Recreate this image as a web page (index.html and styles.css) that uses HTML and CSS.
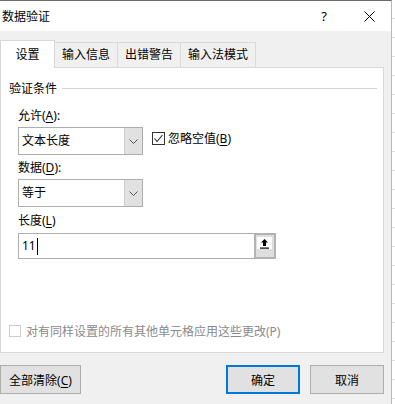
FILE: index.html
```html
<!DOCTYPE html>
<html lang="zh-CN">
<head>
    <meta charset="UTF-8">
    <title>数据验证</title>
    <link rel="stylesheet" href="styles.css">
</head>
<body>
    <div class="window">
        <div class="titlebar">
            <span class="title">数据验证</span>
            <span class="help">?</span>
            <span class="close">
                <svg width="11" height="11" viewBox="0 0 11 11"><path d="M0.5 0.5L10.5 10.5M10.5 0.5L0.5 10.5" stroke="#000" stroke-width="1" fill="none"/></svg>
            </span>
        </div>

        <div class="body">
            <div class="tabs">
                <div class="tab active">设置</div>
                <div class="tab">输入信息</div>
                <div class="tab">出错警告</div>
                <div class="tab">输入法模式</div>
            </div>

            <div class="panel">
                <div class="group-title">
                    <span>验证条件</span>
                    <span class="rule"></span>
                </div>

                <div class="field-label">允许(<u>A</u>):</div>
                <div class="row">
                    <div class="combo">
                        <span class="combo-text">文本长度</span>
                        <span class="combo-btn">
                            <svg width="9" height="5" viewBox="0 0 9 5"><path d="M0.5 0.5L4.5 4.5L8.5 0.5" stroke="#555" fill="none"/></svg>
                        </span>
                    </div>
                    <label class="check">
                        <span class="box">
                            <svg width="11" height="11" viewBox="0 0 11 11"><path d="M1.5 5.5L4 8.5L9.5 2" stroke="#222" stroke-width="1.1" fill="none"/></svg>
                        </span>
                        忽略空值(<u>B</u>)
                    </label>
                </div>

                <div class="field-label gap">数据(<u>D</u>):</div>
                <div class="combo">
                    <span class="combo-text">等于</span>
                    <span class="combo-btn">
                        <svg width="9" height="5" viewBox="0 0 9 5"><path d="M0.5 0.5L4.5 4.5L8.5 0.5" stroke="#555" fill="none"/></svg>
                    </span>
                </div>

                <div class="field-label gap2">长度(<u>L</u>)</div>
                <div class="input-row">
                    <div class="text-input">11<span class="caret"></span></div>
                    <div class="ref-btn">
                        <span class="ref-icon">
                            <svg width="11" height="11" viewBox="0 0 11 11">
                                <path d="M5.5 1L9 4.5H7V8H4V4.5H2Z" fill="#000"/>
                                <rect x="1" y="9.5" width="9" height="1.2" fill="#000"/>
                            </svg>
                        </span>
                    </div>
                </div>

                <label class="apply-all">
                    <span class="box disabled"></span>
                    对有同样设置的所有其他单元格应用这些更改(P)
                </label>
            </div>

            <div class="buttons">
                <button class="btn">全部清除(<u>C</u>)</button>
                <span class="spacer"></span>
                <button class="btn default">确定</button>
                <button class="btn">取消</button>
            </div>
        </div>
    </div>
</body>
</html>
```

FILE: styles.css
```css
body {
    margin: 0;
    width: 395px;
    height: 404px;
    overflow: hidden;
    font-family: "Noto Sans", "Noto Sans CJK SC", sans-serif;
    font-size: 12px;
    color: #000;
    background-color: #fff;
    background-image: repeating-linear-gradient(to bottom, transparent 0, transparent 18px, #dedede 18px, #dedede 19px);
}
.window {
    width: 392px;
    height: 404px;
    border-top: 1px solid #6b6b6b;
    border-right: 1px solid #b9b9b9;
    box-sizing: border-box;
    background: #f0f0f0;
}
.titlebar {
    height: 30px;
    display: flex;
    align-items: center;
    background: #fff;
}
.title {margin-left: 2px; flex: 1;}
.help {
    font-size: 13px;
    margin-right: 37px;
}
.close {
    display: flex;
    margin-right: 16px;
    margin-top: 1px;
}
.body {padding-top: 9px;}
.tabs {
    display: flex;
    align-items: flex-end;
    height: 27px;
}
.tab {
    height: 25px;
    line-height: 23px;
    box-sizing: border-box;
    padding: 0 7px;
    border: 1px solid #d9d9d9;
    border-bottom: none;
    border-left: none;
    background: #f0f0f0;
}
.tab.active {
    height: 28px;
    line-height: 28px;
    width: 55px;
    text-align: center;
    padding: 0;
    margin-bottom: -1px;
    border-left: 1px solid #d9d9d9;
    background: #fff;
    position: relative;
    z-index: 1;
}
.panel {
    width: 384px;
    height: 286px;
    box-sizing: border-box;
    border: 1px solid #d9d9d9;
    background: #fff;
    padding: 12px 6px 0 8px;
}
.group-title {
    display: flex;
    align-items: center;
    height: 16px;
}
.rule {
    flex: 1;
    height: 1px;
    margin-left: 5px;
    background: #d5d5d5;
}
.field-label {
    height: 16px;
    line-height: 16px;
    margin: 12px 0 3px 9px;
}
.field-label.gap {margin-top: 5px;}
.field-label.gap2 {margin-top: 6px; margin-bottom: 4px;}
u {text-decoration-thickness: 1px; text-underline-offset: 2px;}
.row {
    display: flex;
    align-items: flex-start;
}
.combo {
    width: 125px;
    height: 28px;
    box-sizing: border-box;
    margin-left: 9px;
    border: 1px solid #adadad;
    display: flex;
}
.combo-text {
    flex: 1;
    line-height: 26px;
    padding-left: 3px;
}
.combo-btn {
    width: 17px;
    background: #e1e1e1;
    border-left: 1px solid #cfcfcf;
    display: flex;
    align-items: center;
    justify-content: center;
    padding-top: 1px;
}
.check {
    display: flex;
    align-items: center;
    margin: 2px 0 0 9px;
}
.box {
    width: 13px;
    height: 13px;
    box-sizing: border-box;
    border: 1px solid #333;
    display: flex;
    align-items: center;
    justify-content: center;
    margin-right: 3px;
}
.box.disabled {
    width: 12px;
    height: 12px;
    border-color: #cccccc;
    margin-right: 5px;
}
.input-row {
    display: flex;
    margin-left: 9px;
    height: 26px;
}
.text-input {
    width: 236px;
    box-sizing: border-box;
    border: 1px solid #adadad;
    border-right: none;
    line-height: 24px;
    padding-left: 3px;
    display: flex;
    align-items: center;
}
.caret {
    width: 1px;
    height: 17px;
    background: #000;
    margin-left: 1px;
}
.ref-btn {
    width: 22px;
    box-sizing: border-box;
    border: 2px solid #b2b2b2;
    background: #dedede;
}
.ref-icon {
    display: flex;
    justify-content: center;
    align-items: center;
    width: 15px;
    height: 12px;
    margin: 2px 0 0 1px;
    background: #fff;
}
.apply-all {
    display: flex;
    align-items: center;
    height: 16px;
    margin-top: 64px;
    color: #8a8a8a;
}
.buttons {
    display: flex;
    margin-top: 12px;
    padding-right: 7px;
}
.spacer {flex: 1;}
.btn {
    height: 29px;
    width: 74px;
    box-sizing: border-box;
    border: 1px solid #adadad;
    background: #e1e1e1;
    font-family: inherit;
    font-size: 12px;
    color: #000;
    padding: 0;
}
.btn:first-child {width: 81px;}
.btn.default {
    border: 2px solid #0078d7;
    margin-right: 10px;
}
```
